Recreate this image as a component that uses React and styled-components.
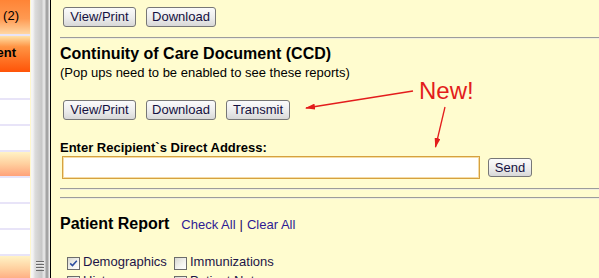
import styled, { createGlobalStyle } from 'styled-components';

const GlobalStyle = createGlobalStyle`
  html, body {
    margin: 0;
    padding: 0;
  }
  body {
    font-family: "Liberation Sans", Arial, sans-serif;
    background: #fffccf;
  }
`;

const tones = {
  orangeTop: 'linear-gradient(#ff8436 0%, #ff9a52 55%, #ffd7a4 100%)',
  orangeDeep: 'linear-gradient(#ffe2a8 0%, #ff9444 30%, #ff6a1c 75%, #ff5408 100%)',
  peach: 'linear-gradient(#fff3c6 0%, #ffcf9e 50%, #ffa27a 100%)',
  white: '#ffffff',
};

const Page = styled.div`
  position: relative;
  display: flex;
  width: 599px;
  height: 278px;
  overflow: hidden;
  background: #fffccf;
`;

const Sidebar = styled.div`
  flex: none;
  width: 30px;
  display: flex;
  flex-direction: column;
  background: #fff;
`;

const NavItem = styled.div`
  flex: none;
  box-sizing: border-box;
  height: ${p => p.$h}px;
  display: flex;
  justify-content: flex-end;
  align-items: flex-start;
  padding: ${p => p.$pt || 0}px ${p => p.$pr || 0}px 0 0;
  overflow: hidden;
  white-space: nowrap;
  font-size: 13px;
  line-height: 15px;
  font-weight: ${p => (p.$bold ? 'bold' : 'normal')};
  color: #000;
  background: ${p => tones[p.$tone]};
  border-bottom: ${p => (p.$line ? '2px solid #e8e4f8' : 'none')};
`;

const Strip = styled.div`
  flex: none;
  width: 1px;
  background: #fff7cc;
`;

const Splitter = styled.div`
  flex: none;
  width: 19px;
  display: flex;
  flex-direction: column;
  justify-content: flex-end;
  border-right: 1px solid #000;
  background: linear-gradient(
    to right,
    #f6f6f6 0px,
    #f2f2f2 2px,
    #dcdcdc 4px,
    #c6c6c6 11px,
    #e2e2e2 12px,
    #e2e2e2 14px,
    #a4a4a4 15px,
    #a4a4a4 17px,
    #ececec 18px
  );
`;

const Grip = styled.div`
  width: 8px;
  height: 10px;
  margin: 0 0 7px 5px;
  background: repeating-linear-gradient(#6a6a6a 0 1px, #e8e8e8 1px 2px, transparent 2px 3px);
`;

const Content = styled.div`
  flex: 1;
  min-width: 0;
  padding: 7px 0 0 9px;
`;

const ButtonRow = styled.div`
  display: flex;
  gap: 10px;
  margin: ${p => p.$mt || 0}px 0 0 3px;
`;

const Button = styled.button`
  box-sizing: border-box;
  width: ${p => p.$w}px;
  height: ${p => p.$h || 20}px;
  padding: 0;
  border: 1px solid #777;
  border-radius: 3px;
  background: linear-gradient(#fbfbfb 0%, #ececec 55%, #d8d8d8 100%);
  font-family: "Liberation Sans", Arial, sans-serif;
  font-size: 13px;
  line-height: 16px;
  color: #141040;
  flex: none;
`;

const Rule = styled.div`
  height: 0;
  margin-top: ${p => p.$mt}px;
  border-top: 1px solid #9c9c9c;
  border-bottom: 1px solid #f1efdc;
`;

const Heading = styled.h2`
  margin: ${p => p.$mt || 0}px 0 0;
  font-size: 16px;
  line-height: 18px;
  font-weight: bold;
  color: #000;
`;

const Note = styled.div`
  margin-top: 2px;
  font-size: 13px;
  line-height: 15px;
  color: #000;
`;

const FieldLabel = styled.label`
  display: block;
  margin-top: 20px;
  font-size: 13px;
  line-height: 15px;
  font-weight: bold;
  color: #000;
`;

const AddressRow = styled.div`
  display: flex;
  align-items: center;
  gap: 8px;
  margin: 1px 0 0 2px;
`;

const AddressInput = styled.input`
  box-sizing: border-box;
  width: 418px;
  height: 23px;
  margin: 0;
  border: 1px solid #d6a13f;
  box-shadow: inset 0 0 0 1px #f4dca6;
  background: #fff;
  outline: none;
`;

const ReportHead = styled.div`
  display: flex;
  align-items: baseline;
  gap: 12px;
  margin-top: 16px;
`;

const Links = styled.div`
  font-size: 13px;
  line-height: 15px;
  color: #2e1a94;
`;

const Sep = styled.span`
  color: #1a0e5e;
  padding: 0 4px;
`;

const CheckGrid = styled.div`
  display: grid;
  grid-template-columns: 107px 107px;
  row-gap: 3px;
  margin-top: 21px;
  padding-left: 7px;
`;

const CheckItem = styled.div`
  display: flex;
  align-items: flex-start;
  gap: 3px;
  font-size: 13px;
  line-height: 16px;
  color: #1c1448;
  white-space: nowrap;
`;

const Box = styled.span`
  flex: none;
  box-sizing: border-box;
  width: 13px;
  height: 13px;
  margin-top: 3px;
  border: 1px solid #6c6c6c;
  background: linear-gradient(135deg, #d8d8d2 0%, #f4f4f0 60%, #ffffff 100%);
  display: flex;
  align-items: center;
  justify-content: center;
`;

const NewTag = styled.span`
  position: absolute;
  left: 419px;
  top: 77px;
  font-size: 24px;
  line-height: 28px;
  color: #e31c1c;
  pointer-events: none;
`;

const Overlay = styled.svg`
  position: absolute;
  left: 0;
  top: 0;
  pointer-events: none;
`;

const navItems = [
  { h: 36, tone: 'orangeTop', text: 'Messages (2)', pt: 8, pr: 11, line: true },
  { h: 36, tone: 'orangeDeep', text: 'Document Management', pt: 9, pr: 14, bold: true },
  { h: 28, tone: 'white', line: true },
  { h: 26, tone: 'white', line: true },
  { h: 26, tone: 'white', line: true },
  { h: 26, tone: 'peach', line: true },
  { h: 26, tone: 'white', line: true },
  { h: 26, tone: 'white', line: true },
  { h: 26, tone: 'white', line: true },
  { h: 26, tone: 'peach' },
];

const checks = [
  { label: 'Demographics', checked: true },
  { label: 'Immunizations' },
  { label: 'History' },
  { label: 'Patient Notes' },
];

const Check = ({ label, checked }) => (
  <CheckItem>
    <Box>
      {checked && (
        <svg width="9" height="9" viewBox="0 0 9 9">
          <path d="M1.2 4.4 L3.5 6.6 L7.8 1.8" fill="none" stroke="#2b4c9e" strokeWidth="1.5" />
        </svg>
      )}
    </Box>
    {label}
  </CheckItem>
);

const App = () => {
  return (
    <>
      <GlobalStyle />
      <Page>
        <Sidebar>
          {navItems.map((item, i) => (
            <NavItem
              key={i}
              $h={item.h}
              $tone={item.tone}
              $pt={item.pt}
              $pr={item.pr}
              $line={item.line}
              $bold={item.bold}
            >
              {item.text}
            </NavItem>
          ))}
        </Sidebar>
        <Strip />
        <Splitter>
          <Grip />
        </Splitter>
        <Content>
          <ButtonRow>
            <Button $w={73}>View/Print</Button>
            <Button $w={70}>Download</Button>
          </ButtonRow>
          <Rule $mt={10} />
          <Heading $mt={6}>Continuity of Care Document (CCD)</Heading>
          <Note>(Pop ups need to be enabled to see these reports)</Note>
          <ButtonRow $mt={20}>
            <Button $w={73}>View/Print</Button>
            <Button $w={70}>Download</Button>
            <Button $w={64}>Transmit</Button>
          </ButtonRow>
          <FieldLabel>Enter Recipient`s Direct Address:</FieldLabel>
          <AddressRow>
            <AddressInput type="text" />
            <Button $w={44} $h={19}>Send</Button>
          </AddressRow>
          <Rule $mt={9} />
          <Rule $mt={7} />
          <ReportHead>
            <Heading>Patient Report</Heading>
            <Links>
              Check All<Sep>|</Sep>Clear All
            </Links>
          </ReportHead>
          <CheckGrid>
            {checks.map(c => (
              <Check key={c.label} label={c.label} checked={c.checked} />
            ))}
          </CheckGrid>
        </Content>

        <NewTag>New!</NewTag>
        <Overlay width="599" height="278" viewBox="0 0 599 278">
          <defs>
            <marker id="head" markerWidth="10" markerHeight="6" refX="9" refY="3" orient="auto" markerUnits="userSpaceOnUse">
              <path d="M0 0 L10 3 L0 6 Z" fill="#e31c1c" />
            </marker>
          </defs>
          <line x1="413" y1="91" x2="306" y2="108" stroke="#e31c1c" strokeWidth="1.3" markerEnd="url(#head)" />
          <line x1="445" y1="107" x2="435.5" y2="147" stroke="#e31c1c" strokeWidth="1.3" markerEnd="url(#head)" />
        </Overlay>
      </Page>
    </>
  );
};

export default App;
